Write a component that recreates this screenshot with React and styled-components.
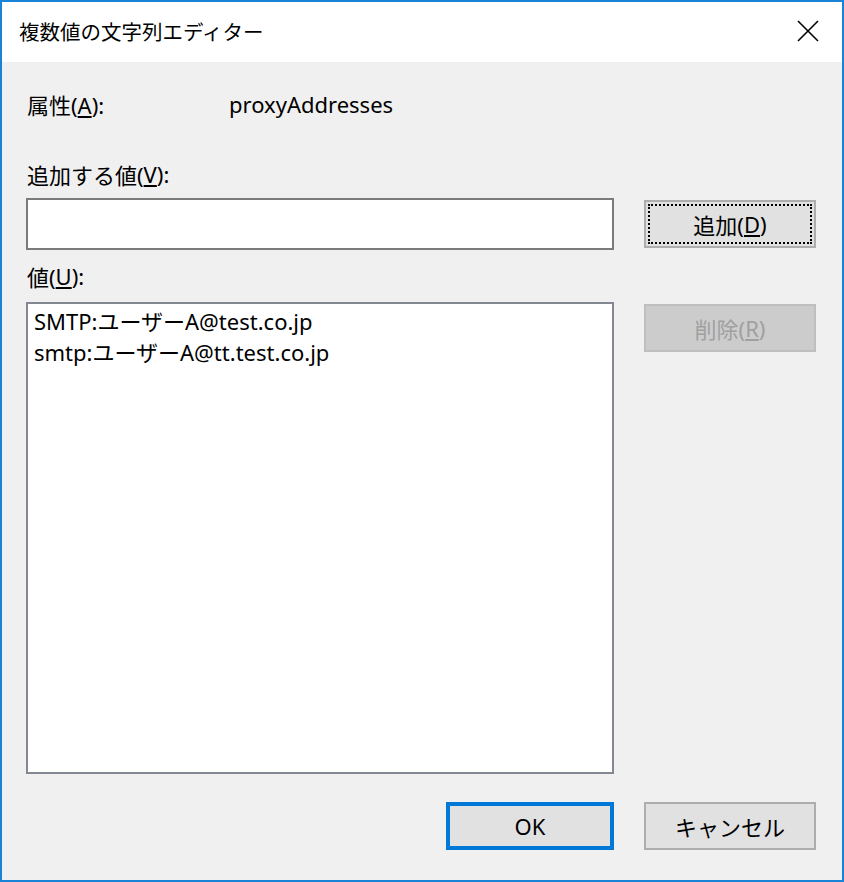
import React from 'react';
import styled, { createGlobalStyle } from 'styled-components';

const GlobalStyle = createGlobalStyle`
  html, body {
    margin: 0;
    padding: 0;
    background: #f0f0f0;
  }
  body {
    font-family: "Noto Sans", "Noto Sans CJK JP", sans-serif;
  }
`;

const Window = styled.div`
  width: 844px;
  height: 882px;
  box-sizing: border-box;
  border: 2px solid #1883d7;
  background: #f0f0f0;
  display: flex;
  flex-direction: column;
  color: #000;
`;

const TitleBar = styled.div`
  height: 60px;
  background: #fff;
  display: flex;
  align-items: center;
  justify-content: space-between;
  padding: 0 23px 0 17px;
  flex-shrink: 0;
`;

const Title = styled.div`
  font-family: "Noto Sans CJK JP", sans-serif;
  font-size: 20.5px;
  line-height: 1;
  margin-top: -1px;
`;

const CloseIcon = styled.svg`
  width: 22px;
  height: 22px;
  display: block;
  margin-top: -2px;
`;

const Body = styled.div`
  flex: 1;
  display: flex;
  flex-direction: column;
  padding: 24px 26px 0 24px;
  font-size: 22px;
`;

const AttrRow = styled.div`
  height: 36px;
  display: flex;
  align-items: center;
`;

const AttrName = styled.span`
  width: 202px;
  padding-left: 1px;
`;

const Label = styled.div`
  height: 36px;
  display: flex;
  align-items: center;
  padding-left: 1px;
  margin-top: ${p => p.$top}px;
`;

const Row = styled.div`
  display: flex;
  gap: 30px;
  margin-top: ${p => p.$top}px;
  align-items: ${p => p.$align || 'flex-start'};
`;

const TextInput = styled.input`
  width: 588px;
  height: 52px;
  box-sizing: border-box;
  border: 2px solid #7a7a7a;
  background: #fff;
  outline: none;
  font: inherit;
  padding: 0 6px;
`;

const ListBox = styled.div`
  width: 588px;
  height: 472px;
  box-sizing: border-box;
  border: 2px solid #828790;
  background: #fff;
  padding: 2px 6px;
  line-height: 31px;
`;

const Button = styled.button`
  position: relative;
  width: ${p => p.$w || 172}px;
  height: 48px;
  box-sizing: border-box;
  border: ${p => (p.$default ? '4px solid #0078d7' : '2px solid ' + (p.disabled ? '#bfbfbf' : '#adadad'))};
  background: ${p => (p.disabled ? '#cccccc' : '#e1e1e1')};
  color: ${p => (p.disabled ? '#a0a0a0' : '#000')};
  font: inherit;
  font-size: 22px;
  padding: 0;
  margin-top: ${p => p.$top || 0}px;
  display: flex;
  align-items: center;
  justify-content: center;
  cursor: default;

  &::after {
    content: '';
    display: ${p => (p.$focus ? 'block' : 'none')};
    position: absolute;
    inset: 2px;
    border: 2px dotted #000;
  }
`;

const Footer = styled.div`
  display: flex;
  justify-content: flex-end;
  gap: 30px;
  margin-top: 28px;
`;

export default function App() {
  return (
    <>
      <GlobalStyle />
      <Window>
        <TitleBar>
          <Title>複数値の文字列エディター</Title>
          <CloseIcon viewBox="0 0 22 22">
            <path d="M1 1 L21 21 M21 1 L1 21" stroke="#000" strokeWidth="1.6" fill="none" />
          </CloseIcon>
        </TitleBar>
        <Body>
          <AttrRow>
            <AttrName>属性(<u>A</u>):</AttrName>
            <span>proxyAddresses</span>
          </AttrRow>
          <Label $top={34}>追加する値(<u>V</u>):</Label>
          <Row $top={6} $align="center">
            <TextInput />
            <Button $focus>追加(<u>D</u>)</Button>
          </Row>
          <Label $top={8}>値(<u>U</u>):</Label>
          <Row $top={8}>
            <ListBox>
              <div>SMTP:ユーザーA@test.co.jp</div>
              <div>smtp:ユーザーA@tt.test.co.jp</div>
            </ListBox>
            <Button disabled $top={2}>削除(<u>R</u>)</Button>
          </Row>
          <Footer>
            <Button $default $w={168}>OK</Button>
            <Button>キャンセル</Button>
          </Footer>
        </Body>
      </Window>
    </>
  );
}
